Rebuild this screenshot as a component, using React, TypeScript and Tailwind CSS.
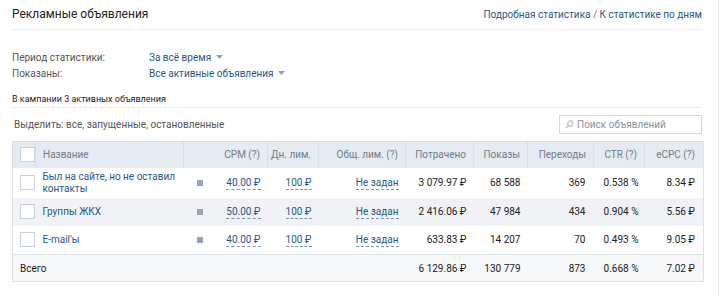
const link = "text-[#2a5885]";

function Caret() {
  return (
    <svg width="7" height="4" viewBox="0 0 7 4" className="ml-[5px] inline-block">
      <path d="M0 0h7L3.5 4z" fill="#8fa1b4" />
    </svg>
  );
}

function Checkbox() {
  return <div className="w-[15px] h-[15px] border border-[#c8d0d9] bg-white" />;
}

function Dashed({ children }: { children: React.ReactNode }) {
  return (
    <span className={`${link} border-b border-dashed border-[#7a93b3] leading-[13px] inline-block`}>
      {children}
    </span>
  );
}

const rows = [
  { name: "Был на сайте, но не оставил контакты", cpm: "40.00 ₽", spent: "3 079.97 ₽", shows: "68 588", clicks: "369", ctr: "0.538 %", ecpc: "8.34 ₽", h: "h-[30px]", bg: "bg-white" },
  { name: "Группы ЖКХ", cpm: "50.00 ₽", spent: "2 416.06 ₽", shows: "47 984", clicks: "434", ctr: "0.904 %", ecpc: "5.56 ₽", h: "h-[28px]", bg: "bg-[#f0f2f5]" },
  { name: "E-mail'ы", cpm: "40.00 ₽", spent: "633.83 ₽", shows: "14 207", clicks: "70", ctr: "0.493 %", ecpc: "9.05 ₽", h: "h-[29px]", bg: "bg-white" },
];

export default function App() {
  return (
    <div className="w-[720px] h-[296px] bg-white overflow-hidden" style={{ fontFamily: "Roboto, 'Noto Sans', sans-serif" }}>
      <div className="w-[719px] h-full border-r border-[#e7e8ec] pl-3 pr-4">
        {/* Заголовок */}
        <div className="flex items-center justify-between h-[30px] border-b border-[#eceef1]">
          <span className="text-[12px] text-[#222] -mt-[2px]">Рекламные объявления</span>
          <span className={`text-[10px] ${link}`}>
            Подробная статистика <span className="text-[#6d7f95]">/</span> К статистике по дням
          </span>
        </div>

        {/* Фильтры */}
        <div className="pt-[19px] text-[10px]">
          <div className="flex items-center h-[16px]">
            <span className="w-[137px] text-[#555]">Период статистики:</span>
            <span className={`${link} flex items-center`}>За всё время<Caret /></span>
          </div>
          <div className="flex items-center h-[16px]">
            <span className="w-[137px] text-[#555]">Показаны:</span>
            <span className={`${link} flex items-center`}>Все активные объявления<Caret /></span>
          </div>
        </div>

        <div className="mt-[10px] text-[9px] text-[#222] h-[17px] leading-[17px] border-b border-[#eceef1]">
          В кампании 3 активных объявления
        </div>

        <div className="flex items-center justify-between h-[33px]">
          <span className="pl-[2px] text-[10px] text-[#555]">Выделить: все, запущенные, остановленные</span>
          <div className="w-[143px] h-[19px] border border-[#d3d9de] flex items-center pl-[5px] gap-[3px]">
            <svg width="9" height="9" viewBox="0 0 10 10">
              <circle cx="6" cy="4" r="3" fill="none" stroke="#b5bdc6" strokeWidth="1.2" />
              <path d="M3.8 6.2L1 9" stroke="#b5bdc6" strokeWidth="1.4" />
            </svg>
            <span className="text-[10px] text-[#8a939c]">Поиск объявлений</span>
          </div>
        </div>

        {/* Таблица */}
        <table className="w-[691px] table-fixed border-collapse border border-[#dce1e6] text-[10px]">
          <colgroup>
            <col className="w-[23px]" />
            <col className="w-[148px]" />
            <col className="w-[30px]" />
            <col className="w-[54px]" />
            <col className="w-[51px]" />
            <col className="w-[87px]" />
            <col className="w-[68px]" />
            <col className="w-[54px]" />
            <col className="w-[66px]" />
            <col className="w-[51px]" />
            <col className="w-[59px]" />
          </colgroup>
          <thead>
            <tr className="h-[26px] bg-[#e5ebf1] text-[#737d88]">
              <th className="border-r border-[#d7dee5] pl-[7px]"><Checkbox /></th>
              <th className="border-r border-[#d7dee5] text-left font-normal pl-[7px]">Название</th>
              <th className="font-normal"></th>
              <th className="border-r border-[#d7dee5] text-right font-normal pr-[7px]">CPM (?)</th>
              <th className="border-r border-[#d7dee5] text-right font-normal pr-[7px]">Дн. лим.</th>
              <th className="border-r border-[#d7dee5] text-right font-normal pr-[7px]">Общ. лим. (?)</th>
              <th className="border-r border-[#d7dee5] text-right font-normal pr-[7px]">Потрачено</th>
              <th className="border-r border-[#d7dee5] text-right font-normal pr-[7px]">Показы</th>
              <th className="border-r border-[#d7dee5] text-right font-normal pr-[7px]">Переходы</th>
              <th className="border-r border-[#d7dee5] text-right font-normal pr-[7px]">CTR (?)</th>
              <th className="text-right font-normal pr-[8px]">eCPC (?)</th>
            </tr>
          </thead>
          <tbody className="text-[#222]">
            {rows.map((r) => (
              <tr key={r.name} className={`${r.h} ${r.bg}`}>
                <td className="pl-[7px]"><Checkbox /></td>
                <td className={`pl-[7px] ${link} leading-[12px]`}>{r.name}</td>
                <td>
                  <div className="w-[6px] h-[6px] bg-[#97a5b6] ml-[13px]" />
                </td>
                <td className="text-right pr-[7px]"><Dashed>{r.cpm}</Dashed></td>
                <td className="text-right pr-[7px]"><Dashed>100 ₽</Dashed></td>
                <td className="text-right pr-[7px]"><Dashed>Не задан</Dashed></td>
                <td className="text-right pr-[7px]">{r.spent}</td>
                <td className="text-right pr-[7px]">{r.shows}</td>
                <td className="text-right pr-[8px]">{r.clicks}</td>
                <td className="text-right pr-[6px]">{r.ctr}</td>
                <td className="text-right pr-[8px]">{r.ecpc}</td>
              </tr>
            ))}
            <tr className="h-[27px] bg-[#f7f8fa] border-t border-[#dce1e6]">
              <td colSpan={6} className="pl-[7px] text-[#222]">Всего</td>
              <td className="text-right pr-[7px]">6 129.86 ₽</td>
              <td className="text-right pr-[7px]">130 779</td>
              <td className="text-right pr-[8px]">873</td>
              <td className="text-right pr-[6px]">0.668 %</td>
              <td className="text-right pr-[8px]">7.02 ₽</td>
            </tr>
          </tbody>
        </table>
      </div>
    </div>
  );
}
